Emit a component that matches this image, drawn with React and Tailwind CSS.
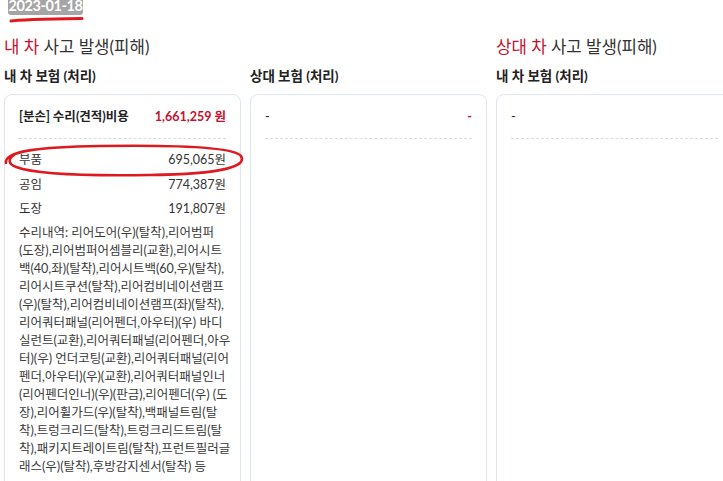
import React from 'react'

const FONT = "font-['Lato','Noto_Sans_CJK_KR',sans-serif]"

const DESC_LINES = [
  '수리내역: 리어도어(우)(탈착),리어범퍼',
  '(도장),리어범퍼어셈블리(교환),리어시트',
  '백(40,좌)(탈착),리어시트백(60,우)(탈착),',
  '리어시트쿠션(탈착),리어컴비네이션램프',
  '(우)(탈착),리어컴비네이션램프(좌)(탈착),',
  '리어쿼터패널(리어펜더,아우터)(우) 바디',
  '실런트(교환),리어쿼터패널(리어펜더,아우',
  '터)(우) 언더코팅(교환),리어쿼터패널(리어',
  '펜더,아우터)(우)(교환),리어쿼터패널인너',
  '(리어펜더인너)(우)(판금),리어펜더(우) (도',
  '장),리어휠가드(우)(탈착),백패널트림(탈',
  '착),트렁크리드(탈착),트렁크리드트림(탈',
  '착),패키지트레이트림(탈착),프런트필러글',
  '래스(우)(탈착),후방감지센서(탈착) 등',
]

const COSTS = [
  { label: '부품', value: '695,065원' },
  { label: '공임', value: '774,387원' },
  { label: '도장', value: '191,807원' },
]

// 카드 상단 (합계 행 + 점선)
const CardHead = ({ left, right, bold }) => (
  <div className="flex items-center justify-between pb-[12px] border-b border-dashed border-[#dcdcdc] h-[31px] text-[12.5px] leading-[18px]">
    <span className={bold ? 'font-bold text-[#222]' : 'text-[#222]'}>{left}</span>
    {right && <span className="font-bold text-[#c5112f]">{right}</span>}
  </div>
)

const Column = ({ title, children }) => (
  <div className="w-[237px] shrink-0 flex flex-col">
    <h3 className="text-[13.5px] leading-[20px] font-bold text-[#222] mb-[8px]">{title}</h3>
    <div className="flex-1 border border-[#dfe5ee] rounded-[8px] px-[14px] pt-[13px] pb-[16px]">
      {children}
    </div>
  </div>
)

const Section = ({ who, children }) => (
  <div className="flex flex-col">
    <h2 className="text-[16.8px] leading-[24px] text-[#333] mb-[7px]">
      <span className="text-[#c5112f]">{who}</span> 사고 발생(피해)
    </h2>
    <div className="flex-1 flex gap-[9px]">{children}</div>
  </div>
)

export default function App() {
  return (
    <div className={`${FONT} relative w-[723px] h-screen overflow-hidden bg-white`}>
      {/* 날짜 배지 */}
      <div className="ml-[8px] mt-[-8px] w-[75px] h-[23px] bg-[#a5a5a5] rounded-b-[3px] flex items-end justify-center">
        <span className="text-white font-bold text-[14.5px] leading-[18px] tracking-[-0.4px]">2023-01-18</span>
      </div>

      {/* 손글씨 밑줄 */}
      <svg className="absolute left-0 top-0" width="100" height="30">
        <path d="M11 21 C 20 19.5, 50 19, 82 18.5" stroke="#e3191f" strokeWidth="3" fill="none" strokeLinecap="round" />
      </svg>

      <div className="flex items-stretch gap-[9px] pl-[4px] mt-[20px]">
        <Section who="내 차">
          <Column title="내 차 보험 (처리)">
            <CardHead left="[분손] 수리(견적)비용" right="1,661,259 원" bold />
            <div className="pt-[9px] text-[12.5px] text-[#333]">
              {COSTS.map((c) => (
                <div key={c.label} className="flex justify-between leading-[24.5px]">
                  <span>{c.label}</span>
                  <span>{c.value}</span>
                </div>
              ))}
              <div className="mt-[2px] text-[#3a3a3a] leading-[18px]">
                {DESC_LINES.map((line, i) => (
                  <div key={i} className="whitespace-nowrap">{line}</div>
                ))}
              </div>
            </div>
          </Column>
          <Column title="상대 보험 (처리)">
            <CardHead left="-" right="-" />
          </Column>
        </Section>

        <Section who="상대 차">
          <Column title="내 차 보험 (처리)">
            <CardHead left="-" />
          </Column>
        </Section>
      </div>

      {/* 부품 행 강조 동그라미 */}
      <svg className="absolute left-0 top-[139px]" width="250" height="45">
        <path
          d="M6 24 C 4 12, 40 8, 100 7 C 170 6, 234 8, 241 17 C 247 27, 225 35, 150 36 C 90 37, 35 35, 16 28 C 8 25, 8 20, 14 16"
          stroke="#dc1a20"
          strokeWidth="2.6"
          fill="none"
          strokeLinecap="round"
        />
      </svg>
    </div>
  )
}
